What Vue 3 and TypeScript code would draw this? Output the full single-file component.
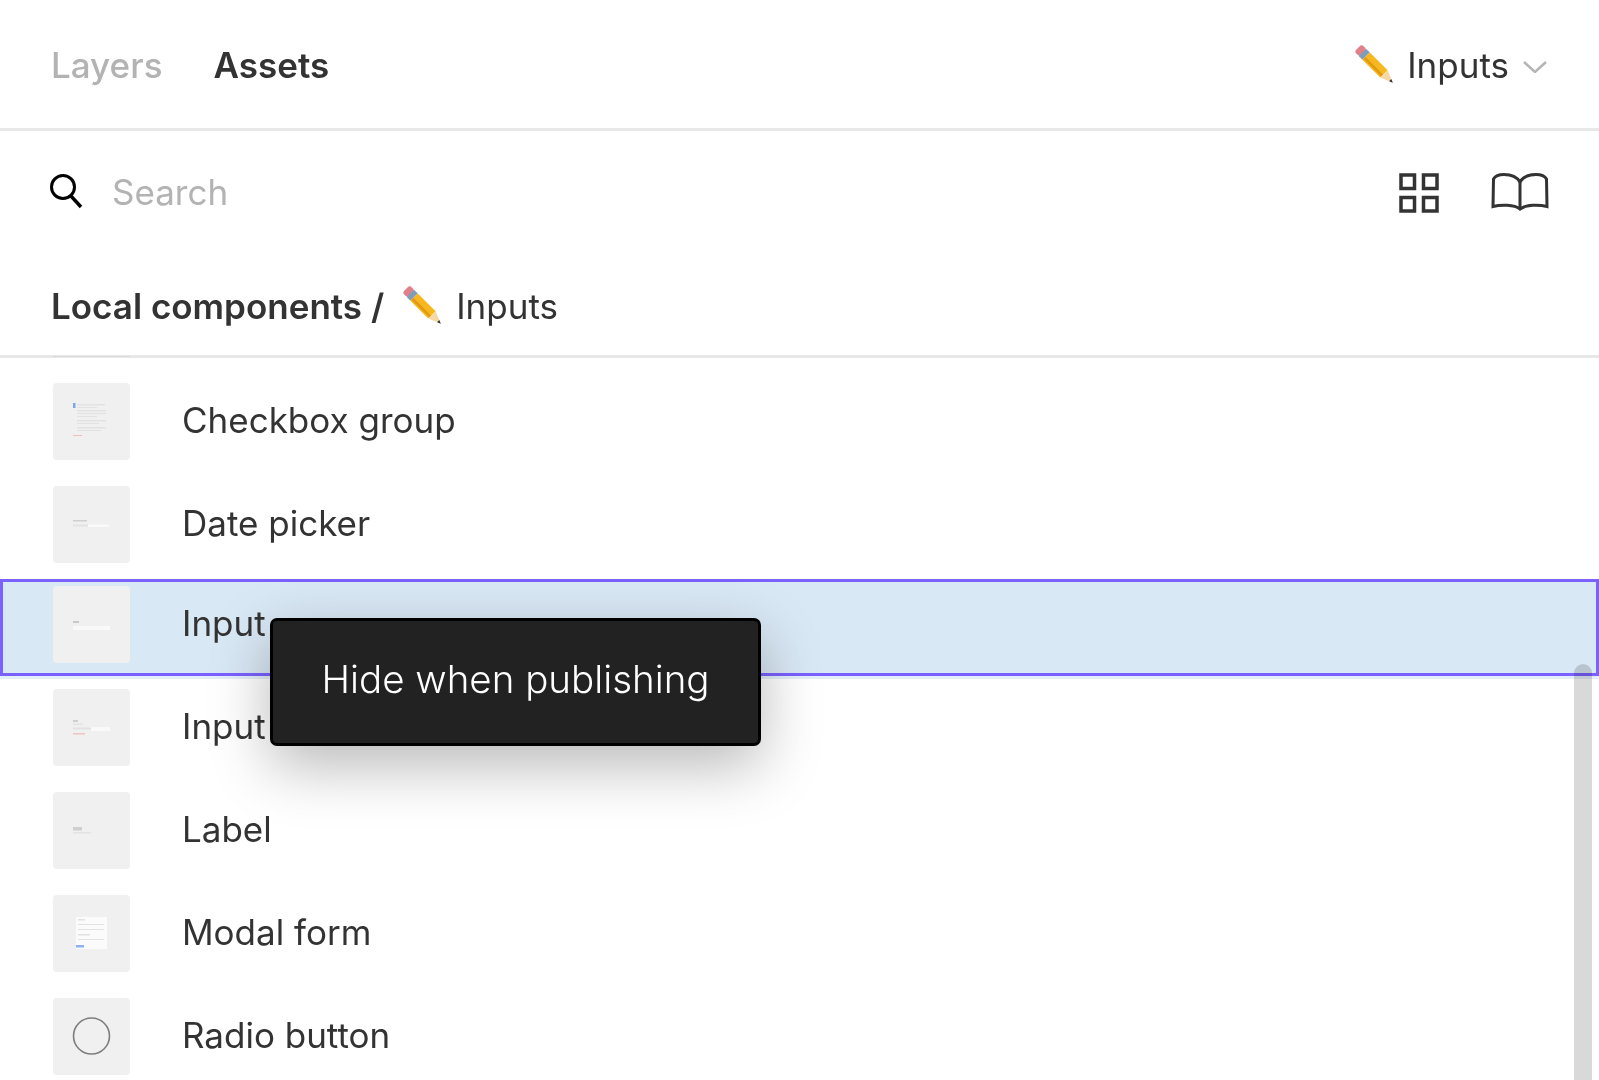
<script setup lang="ts">
interface Shape { x: number; y: number; w: number; h: number; c: string }
interface Row { name: string; selected?: boolean; radio?: boolean; shapes: Shape[] }
const G = '#cfcfcf'
const L = '#e2e2e2'
const W = '#f9f9f9'
const rows: Row[] = [
  { name: 'Checkbox group', shapes: [
    { x: 20, y: 20, w: 2.500, h: 5, c: '#7fa3ec' },
    { x: 24, y: 21, w: 28, h: 1.500, c: L }, { x: 24, y: 24, w: 20, h: 1, c: L },
    { x: 24, y: 27, w: 29, h: 1.500, c: L }, { x: 24, y: 30, w: 29, h: 1, c: L }, { x: 24, y: 33, w: 20, h: 1, c: L },
    { x: 24, y: 37, w: 29, h: 1.500, c: L }, { x: 24, y: 40, w: 22, h: 1, c: L },
    { x: 24, y: 44, w: 29, h: 1.500, c: L }, { x: 24, y: 47, w: 24, h: 1, c: L },
    { x: 20, y: 52, w: 9, h: 1, c: '#ecc0c0' } ] },
  { name: 'Date picker', shapes: [
    { x: 20, y: 34, w: 14, h: 1.500, c: G }, { x: 20, y: 38.500, w: 15, h: 2, c: L }, { x: 35, y: 38.500, w: 21, h: 2.500, c: W } ] },
  { name: 'Input', selected: true, shapes: [
    { x: 20, y: 35, w: 6, h: 2, c: '#c9c9c9' }, { x: 20, y: 40, w: 37, h: 4, c: W } ] },
  { name: 'Input', shapes: [
    { x: 20, y: 31, w: 5, h: 2, c: G }, { x: 20, y: 34.500, w: 10, h: 1.500, c: L }, { x: 20, y: 38.500, w: 18, h: 2, c: L }, { x: 38, y: 38, w: 19, h: 4, c: W }, { x: 20, y: 44, w: 12, h: 1.500, c: '#eec4c4' } ] },
  { name: 'Label', shapes: [
    { x: 20, y: 35, w: 9, h: 3.500, c: G }, { x: 20, y: 40, w: 18, h: 1.500, c: L } ] },
  { name: 'Modal form', shapes: [
    { x: 23, y: 22, w: 31, h: 32, c: '#fbfbfb' }, { x: 25, y: 24, w: 7, h: 1.500, c: L }, { x: 25, y: 29, w: 26, h: 1, c: L }, { x: 25, y: 34, w: 26, h: 1, c: L }, { x: 25, y: 39, w: 12, h: 1.500, c: L }, { x: 25, y: 44, w: 26, h: 1, c: L }, { x: 23, y: 50, w: 8, h: 2.500, c: '#8fb1f0' } ] },
  { name: 'Radio button', radio: true, shapes: [] },
]
</script>

<template>
  <div class="screen">
    <header class="tabs">
      <span class="tab">Layers</span>
      <span class="tab active">Assets</span>
      <div class="picker">
        <svg class="pencil" viewBox="0 0 40 40">
          <g transform="rotate(45 20 20)">
            <rect x="-3" y="15" width="7" height="10" rx="3" fill="#e2808a" />
            <rect x="3" y="15" width="5" height="10" fill="#7f9dbb" />
            <rect x="8" y="15" width="24" height="10" fill="#f6b81e" />
            <rect x="8" y="21" width="24" height="2.500" fill="#e19a12" />
            <path d="M32 15 L44 20 L32 25 Z" fill="#f4d9a6" />
            <path d="M40.500 18.500 L44 20 L40.500 21.500 Z" fill="#333" />
          </g>
        </svg>
        <span class="picker-name">Inputs</span>
        <svg class="chevron" viewBox="0 0 24 12"><path d="M1 1 L12 11 L23 1" fill="none" stroke="#b5b5b5" stroke-width="2.500" /></svg>
      </div>
    </header>

    <div class="search">
      <svg class="search-icon" viewBox="0 0 34 36">
        <circle cx="14" cy="13" r="11.500" fill="none" stroke="#000" stroke-width="3" />
        <path d="M22 22 L32 33" stroke="#000" stroke-width="3.400" />
      </svg>
      <span class="search-text">Search</span>
      <svg class="grid-icon" viewBox="0 0 40 40" fill="none" stroke="#333" stroke-width="3.500">
        <rect x="2" y="2" width="13.500" height="13.500" />
        <rect x="24.500" y="2" width="13.500" height="13.500" />
        <rect x="2" y="24.500" width="13.500" height="13.500" />
        <rect x="24.500" y="24.500" width="13.500" height="13.500" />
      </svg>
      <svg class="book-icon" viewBox="0 0 58 38" fill="none" stroke="#333" stroke-width="3">
        <path d="M29 9 C26 4 20 1.500 13 1.500 C8 1.500 4.500 2.500 2.500 6 L2 33.500 C10 31.500 23 31.500 29 36 C35 31.500 48 31.500 56 33.500 L55.500 6 C53.500 2.500 50 1.500 45 1.500 C38 1.500 32 4 29 9 Z" />
        <path d="M29 9 V36" />
      </svg>
    </div>

    <div class="section">
      <strong class="section-path">Local components /</strong>
      <svg class="pencil" viewBox="0 0 40 40">
        <g transform="rotate(45 20 20)">
          <rect x="-3" y="15" width="7" height="10" rx="3" fill="#e2808a" />
          <rect x="3" y="15" width="5" height="10" fill="#7f9dbb" />
          <rect x="8" y="15" width="24" height="10" fill="#f6b81e" />
          <rect x="8" y="21" width="24" height="2.500" fill="#e19a12" />
          <path d="M32 15 L44 20 L32 25 Z" fill="#f4d9a6" />
          <path d="M40.500 18.500 L44 20 L40.500 21.500 Z" fill="#333" />
        </g>
      </svg>
      <span class="section-name">Inputs</span>
    </div>

    <ul class="list">
      <li v-for="(row, i) in rows" :key="i" class="row" :class="{ selected: row.selected }">
        <svg class="thumb" viewBox="0 0 77 77">
          <rect width="77" height="77" rx="4" fill="#f0f0f0" />
          <rect v-for="(s, j) in row.shapes" :key="j" :x="s.x" :y="s.y" :width="s.w" :height="s.h" :fill="s.c" />
          <circle v-if="row.radio" cx="38.500" cy="38" r="18" fill="none" stroke="#7d7d7d" stroke-width="1.600" />
        </svg>
        <span class="row-name">{{ row.name }}</span>
      </li>
    </ul>

    <div class="scrollbar"></div>
    <div class="tooltip">Hide when publishing</div>
  </div>
</template>

<style>
html, body { margin: 0; background: #fff; overflow: hidden; }
</style>

<style scoped>
.screen {
  position: relative;
  width: 1599px;
  height: 1080px;
  overflow: hidden;
  background: #fff;
  font-family: Inter, "Liberation Sans", sans-serif;
  color: #333;
  filter: blur(0.7px);
}
.tabs {
  box-sizing: border-box;
  height: 131px;
  display: flex;
  align-items: center;
  padding: 2px 52px 0 51px;
  border-bottom: 3px solid #e8e8e8;
  font-size: 35px;
}
.tab { color: #b3b3b3; font-weight: 500; margin-right: 51px; }
.tab.active { color: #333; font-weight: 600; }
.picker { margin-left: auto; display: flex; align-items: center; }
.pencil { width: 42px; height: 42px; flex: none; }
.picker-name { margin-left: 11px; }
.chevron { width: 24px; height: 12px; margin-left: 14px; margin-top: 4px; }
.search {
  height: 122px;
  display: flex;
  align-items: center;
  padding: 0 50px 0 49px;
}
.search-icon { width: 34px; height: 36px; flex: none; }
.search-text { margin-left: 29px; font-size: 35px; color: #b3b3b3; flex: 1; }
.grid-icon { width: 40px; height: 40px; margin-right: 52px; margin-top: 2px; }
.book-icon { width: 58px; height: 38px; }
.section {
  position: relative;
  box-sizing: border-box;
  height: 105px;
  display: flex;
  align-items: flex-start;
  padding: 32px 51px 0;
  border-bottom: 3px solid #e8e8e8;
  font-size: 35px;
}
.section::after {
  content: "";
  position: absolute;
  left: 53px;
  bottom: -2px;
  width: 77px;
  height: 1px;
  background: #dcdcdc;
}
.section-path { font-weight: 600; }
.section .pencil { margin-left: 18px; margin-top: 0; }
.section-name { margin-left: 12px; }
.list { list-style: none; margin: 0; padding: 12px 0 0; }
.row {
  box-sizing: border-box;
  height: 103px;
  display: flex;
  align-items: flex-start;
  padding: 13px 0 0 53px;
}
.row.selected {
  height: 97px;
  margin-top: 3px;
  padding: 4px 0 0 50px;
  background: #d9e8f5;
  border: 3px solid #7b61ff;
  box-shadow: 0 3px 0 #e3eef8;
}
.thumb { width: 77px; height: 77px; flex: none; }
.row-name { margin-left: 52px; margin-top: 17px; font-size: 35px; line-height: 40px; }
.row.selected .row-name { margin-top: 17px; }
.scrollbar {
  position: absolute;
  left: 1574px;
  top: 664px;
  width: 18px;
  bottom: 0;
  border-radius: 9px 9px 0 0;
  background: rgba(0, 0, 0, 0.15);
}
.tooltip {
  position: absolute;
  left: 270px;
  top: 618px;
  box-sizing: border-box;
  width: 491px;
  height: 128px;
  padding-bottom: 6px;
  display: flex;
  align-items: center;
  justify-content: center;
  background: #222;
  border: 3px solid #000;
  border-radius: 7px;
  color: #fff;
  font-size: 38.500px;
  font-weight: 300;
  box-shadow: 0 20px 60px rgba(0, 0, 0, 0.28);
}
</style>
